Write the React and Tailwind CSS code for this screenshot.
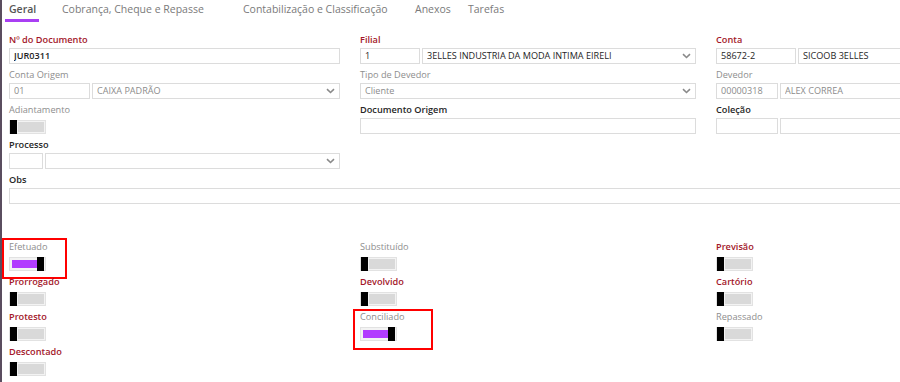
import React from "react"

const Chevron = () => (
  <svg width="9" height="6" viewBox="0 0 9 6" className="shrink-0">
    <path d="M1 1.2 L4.5 4.5 L8 1.2" fill="none" stroke="#8a8a8a" strokeWidth="1.6" />
  </svg>
)

function Label({ children, tone = "gray" }) {
  const color = {
    red: "text-[#a3172a] font-semibold",
    gray: "text-[#8e8e8e]",
    dark: "text-[#262626] font-semibold",
  }[tone]
  return <div className={`h-[14px] leading-[14px] text-[9.2px] ${color}`}>{children}</div>
}

function Box({ children, w, grow, muted, select, bold }) {
  return (
    <div
      className={`h-[16px] border border-[#dcdcdc] bg-white flex items-center pl-[4px] pr-[4px] text-[9.1px] ${
        grow ? "flex-1 min-w-0" : "shrink-0"
      } ${muted ? "text-[#8c8c8c]" : "text-[#1e1e1e]"} ${bold ? "font-semibold" : ""}`}
      style={w ? { width: w } : undefined}
    >
      <span className="flex-1 truncate">{children}</span>
      {select && <Chevron />}
    </div>
  )
}

function Field({ label, tone, children }) {
  return (
    <div className="h-[35px]">
      <Label tone={tone}>{label}</Label>
      <div className="mt-[1px] flex gap-[2px]">{children}</div>
    </div>
  )
}

function Toggle({ on }) {
  return (
    <div className="w-[37px] h-[14px] border border-[#e2e2e2] bg-[#f3f3f3] flex items-center p-[1px]">
      {on ? (
        <>
          <div className="flex-1 h-[8px] ml-[1px] bg-[#b23cff]" />
          <div className="w-[7px] h-[14px] bg-black" />
        </>
      ) : (
        <>
          <div className="w-[7px] h-[14px] -ml-[1px] bg-black" />
          <div className="flex-1 h-[10px] ml-[1px] bg-[#d9d9d9]" />
        </>
      )}
    </div>
  )
}

function Flag({ label, tone, on, mark }) {
  return (
    <div className="relative h-[35px]">
      {mark && <div className={`absolute border-2 border-[#ff0000] ${mark}`} />}
      <Label tone={tone}>{label}</Label>
      <div className="mt-[3px]">
        <Toggle on={on} />
      </div>
    </div>
  )
}

export default function App() {
  return (
    <div
      className="w-[900px] h-[382px] overflow-hidden bg-white flex"
      style={{ fontFamily: '"Open Sans", "Liberation Sans", sans-serif' }}
    >
      <div className="w-[2px] bg-[#5a4d5f] shrink-0" />
      <div className="flex-1 min-w-0">
        {/* tabs */}
        <div className="h-[33px] flex text-[10.5px] text-[#7a7a7a] pl-[7px] pt-[1px]">
          <div className="w-[53px] flex flex-col">
            <span className="font-semibold text-[#555] leading-[16px]">Geral</span>
            <div className="mt-[2px] h-[3px] w-[34px] -ml-[4px] bg-[#a93ff3]" />
          </div>
          <span className="w-[181px] leading-[16px]">Cobrança, Cheque e Repasse</span>
          <span className="w-[172px] leading-[16px]">Contabilização e Classificação</span>
          <span className="w-[53px] leading-[16px]">Anexos</span>
          <span className="leading-[16px]">Tarefas</span>
        </div>

        <div className="pl-[7px] grid grid-cols-[331px_336px_335px] gap-x-[20px]">
          <div>
            <Field label="Nº do Documento" tone="red">
              <Box grow bold>JUR0311</Box>
            </Field>
            <Field label="Conta Origem" tone="gray">
              <Box w={81} muted>01</Box>
              <Box grow muted select>CAIXA PADRÃO</Box>
            </Field>
            <Flag label="Adiantamento" tone="gray" />
            <Field label="Processo" tone="dark">
              <Box w={34} />
              <Box grow select />
            </Field>
          </div>
          <div>
            <Field label="Filial" tone="red">
              <Box w={60}>1</Box>
              <Box grow select>3ELLES INDUSTRIA DA MODA INTIMA EIRELI</Box>
            </Field>
            <Field label="Tipo de Devedor" tone="gray">
              <Box grow muted select>Cliente</Box>
            </Field>
            <Field label="Documento Origem" tone="dark">
              <Box grow />
            </Field>
          </div>
          <div>
            <Field label="Conta" tone="red">
              <Box w={80}>58672-2</Box>
              <Box grow>SICOOB 3ELLES</Box>
            </Field>
            <Field label="Devedor" tone="gray">
              <Box w={62} muted>00000318</Box>
              <Box grow muted>ALEX CORREA</Box>
            </Field>
            <Field label="Coleção" tone="dark">
              <Box w={62} />
              <Box grow />
            </Field>
          </div>
        </div>

        <div className="pl-[7px] w-[1000px]">
          <Field label="Obs" tone="dark">
            <Box w={895} />
          </Field>
        </div>

        <div className="mt-[32px] pl-[7px] grid grid-cols-[331px_336px_335px] gap-x-[20px]">
          <div>
            <Flag label="Efetuado" tone="gray" on mark="-left-[7px] -top-[2px] w-[65px] h-[41px]" />
            <Flag label="Prorrogado" tone="red" />
            <Flag label="Protesto" tone="red" />
            <Flag label="Descontado" tone="red" />
          </div>
          <div>
            <Flag label="Substituído" tone="gray" />
            <Flag label="Devolvido" tone="red" />
            <Flag label="Conciliado" tone="gray" on mark="-left-[7px] -top-[1px] w-[80px] h-[41px]" />
          </div>
          <div>
            <Flag label="Previsão" tone="red" />
            <Flag label="Cartório" tone="red" />
            <Flag label="Repassado" tone="gray" />
          </div>
        </div>
      </div>
    </div>
  )
}
